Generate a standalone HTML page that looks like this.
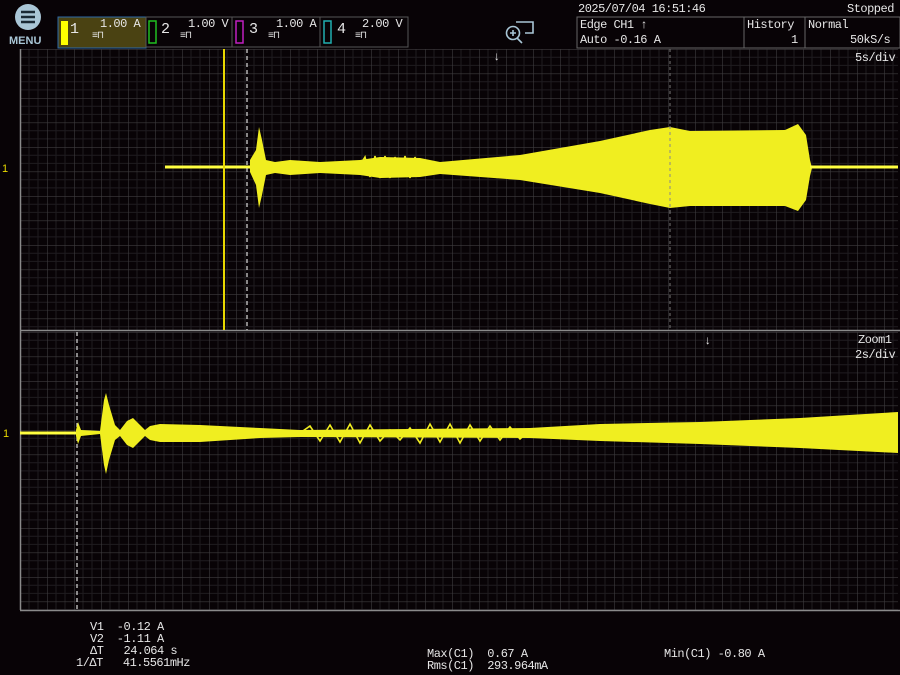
<!DOCTYPE html>
<html><head><meta charset="utf-8"><style>
html,body{margin:0;padding:0;background:#080306;width:900px;height:675px;overflow:hidden}
.t{position:absolute;font-family:"Liberation Mono",monospace;color:#e6e6e6;font-size:12px;line-height:12px;white-space:pre;letter-spacing:-0.5px}
</style></head><body>
<svg width="900" height="675" style="position:absolute;left:0;top:0">
<defs>
<pattern id="g" x="20" y="49" width="27" height="24.5" patternUnits="userSpaceOnUse">
<path d="M9 0V24.5M18 0V24.5M0 8.2H27M0 16.4H27" stroke="#1f1c20" stroke-width="1" fill="none"/>
<path d="M0 0V24.5M0 0H27" stroke="#3e3c3e" stroke-width="1.2" fill="none"/>
</pattern>
<pattern id="g2" x="20" y="332" width="27" height="24.5" patternUnits="userSpaceOnUse">
<path d="M9 0V24.5M18 0V24.5M0 8.2H27M0 16.4H27" stroke="#1f1c20" stroke-width="1" fill="none"/>
<path d="M0 0V24.5M0 0H27" stroke="#3e3c3e" stroke-width="1.2" fill="none"/>
</pattern>
</defs>
<!-- top bar -->
<circle cx="28" cy="17" r="13" fill="#a9c6d6"/>
<path d="M21 12H35M21 17H35M21 22H35" stroke="#1a2a35" stroke-width="2.5"/>
<text x="9" y="44" font-family="Liberation Sans" font-weight="bold" font-size="11" fill="#a9c6d6">MENU</text>
<rect x="58" y="17" width="88" height="31" fill="#4a4212" stroke="#2d6aa8" stroke-width="1"/>
<rect x="61" y="21" width="7" height="24" fill="#ffff00"/>
<rect x="146" y="17" width="86" height="30" fill="#080306" stroke="#555" stroke-width="1"/>
<rect x="149" y="21" width="7" height="22" fill="none" stroke="#20c020" stroke-width="1.5"/>
<rect x="232" y="17" width="88" height="30" fill="#080306" stroke="#555" stroke-width="1"/>
<rect x="236" y="21" width="7" height="22" fill="none" stroke="#c020c0" stroke-width="1.5"/>
<rect x="320" y="17" width="88" height="30" fill="#080306" stroke="#555" stroke-width="1"/>
<rect x="324" y="21" width="7" height="22" fill="none" stroke="#20b0b0" stroke-width="1.5"/>
<rect x="577" y="17" width="323" height="31" fill="none" stroke="#666" stroke-width="1"/>
<path d="M744 17V48M805 17V48" stroke="#666"/>
<circle cx="513" cy="33" r="6.5" fill="none" stroke="#a9c6d6" stroke-width="1.6"/>
<path d="M510 33H516M513 30V36M517 38L522 43M516 22H533V33H525" stroke="#a9c6d6" stroke-width="1.6" fill="none"/>
<!-- grids -->
<rect x="20" y="49" width="878" height="281" fill="url(#g)"/>
<rect x="20" y="332" width="878" height="278" fill="url(#g2)"/>
<path d="M20.5 49V610M20 330.5H900M20 610.5H900" stroke="#8a8a8a" stroke-width="1.5"/>
<path d="M670 49V330" stroke="#777" stroke-dasharray="3,3"/>
<!-- upper waveform -->
<path d="M165 167H250" stroke="#ffff40" stroke-width="3"/>
<path d="M224 49V330" stroke="#e8d800" stroke-width="2"/>
<path d="M247 49V330" stroke="#ddd" stroke-dasharray="4,3" stroke-width="1.2"/>
<polygon fill="#f0ee20" points="250,160 256,150 259,127 262,140 266,160 275,162 290,160 320,162 360,160 380,157 420,158 440,162 520,155 600,141 650,130 670,127 690,131 785,130 798,124 806,135 810,160 812,168 810,176 806,200 798,211 785,206 690,206 670,208 650,204 600,193 520,180 440,174 420,177 380,178 360,175 320,173 290,175 275,173 266,175 262,195 259,208 256,185 250,172"/>
<path d="M360 165 L365 157 370 177 375 156 380 178 385 156 390 178 395 157 400 177 405 156 410 178 415 157 420 176" stroke="#f0ee20" stroke-width="1.6" fill="none"/>
<path d="M810 167H898" stroke="#ffff40" stroke-width="3"/>
<path d="M670 120V215" stroke="#888" stroke-dasharray="3,3"/>
<!-- lower waveform -->
<path d="M20 433H80" stroke="#ffff40" stroke-width="3"/>
<path d="M77 332V610" stroke="#ddd" stroke-dasharray="4,3" stroke-width="1.2"/>
<polygon fill="#f0ee20" points="76,430 78,422 81,430 100,431 104,400 106,393 109,405 115,425 120,430 127,421 133,418 140,425 145,430 150,426 160,424 200,425 260,428 300,430 530,428 600,424 700,422 800,418 898,412 898,453 800,448 700,444 600,441 530,438 300,437 260,438 200,442 160,442 150,440 145,436 140,441 133,448 127,445 120,436 115,440 109,460 106,474 104,465 100,434 81,436 78,444 76,436"/>
<path d="M300 433 L310 426 320 441 330 425 340 442 350 424 360 443 370 425 380 441 390 430 400 440 410 428 420 443 430 424 440 442 450 424 460 443 470 425 480 441 490 426 500 440 510 427 520 439 530 430" stroke="#f0ee20" stroke-width="1.6" fill="none"/>
<text x="2" y="172" font-size="11" fill="#e8d800" font-family="Liberation Sans">1</text>
<text x="3" y="437" font-size="11" fill="#e8d800" font-family="Liberation Sans">1</text>
</svg>
<div class="t" style="left:70px;top:22px;font-size:15px;line-height:15px">1</div>
<div class="t" style="left:100px;top:18px">1.00 A</div>
<div class="t" style="left:92px;top:31px;font-size:10px">≡⊓</div>
<div class="t" style="left:161px;top:22px;font-size:15px;line-height:15px">2</div>
<div class="t" style="left:188px;top:18px">1.00 V</div>
<div class="t" style="left:180px;top:31px;font-size:10px">≡⊓</div>
<div class="t" style="left:249px;top:22px;font-size:15px;line-height:15px">3</div>
<div class="t" style="left:276px;top:18px">1.00 A</div>
<div class="t" style="left:268px;top:31px;font-size:10px">≡⊓</div>
<div class="t" style="left:337px;top:22px;font-size:15px;line-height:15px">4</div>
<div class="t" style="left:362px;top:18px">2.00 V</div>
<div class="t" style="left:355px;top:31px;font-size:10px">≡⊓</div>
<div class="t" style="left:578px;top:3px">2025/07/04 16:51:46</div>
<div class="t" style="left:847px;top:3px">Stopped</div>
<div class="t" style="left:580px;top:19px">Edge CH1 ↑</div>
<div class="t" style="left:580px;top:34px">Auto -0.16 A</div>
<div class="t" style="left:747px;top:19px">History</div>
<div class="t" style="left:791px;top:34px">1</div>
<div class="t" style="left:808px;top:19px">Normal</div>
<div class="t" style="left:850px;top:34px">50kS/s</div>
<div class="t" style="left:855px;top:52px">5s/div</div>
<div class="t" style="left:493px;top:51px">↓</div>
<div class="t" style="left:704px;top:335px">↓</div>
<div class="t" style="left:858px;top:334px">Zoom1</div>
<div class="t" style="left:855px;top:349px">2s/div</div>
<div class="t" style="left:90px;top:621px">V1  -0.12 A</div>
<div class="t" style="left:90px;top:633px">V2  -1.11 A</div>
<div class="t" style="left:90px;top:645px">ΔT   24.064 s</div>
<div class="t" style="left:76px;top:657px">1/ΔT   41.5561mHz</div>
<div class="t" style="left:427px;top:648px">Max(C1)  0.67 A</div>
<div class="t" style="left:427px;top:660px">Rms(C1)  293.964mA</div>
<div class="t" style="left:664px;top:648px">Min(C1) -0.80 A</div>
</body></html>
